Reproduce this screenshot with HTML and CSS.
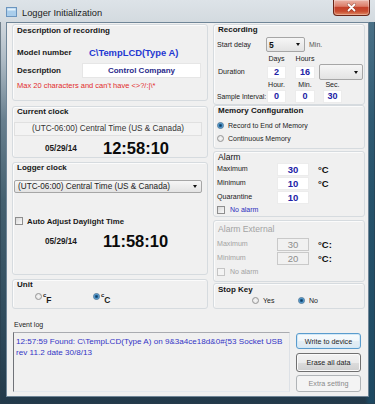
FILE: index.html
```html
<!DOCTYPE html>
<html>
<head>
<meta charset="utf-8">
<title>Logger Initialization</title>
<link rel="stylesheet" href="styles.css">
</head>
<body>
<div class="window">
  <div class="titlebar">
    <svg class="appicon" width="11" height="10" viewBox="0 0 11 10"><rect x="0.5" y="0.5" width="10" height="9" fill="#a9cdeb" stroke="#6b95bf"/><rect x="1.5" y="1.5" width="8" height="2" fill="#e3f1fb"/></svg>
    <span class="wtitle">Logger Initialization</span>
    <div class="closebtn"><svg width="11" height="9" viewBox="0 0 11 9"><path d="M2.5 1.5 L8.5 7.5 M8.5 1.5 L2.5 7.5" stroke="#5a2318" stroke-width="3" stroke-linecap="round" opacity="0.45"/><path d="M2.5 1.5 L8.5 7.5 M8.5 1.5 L2.5 7.5" stroke="#ffffff" stroke-width="1.8" stroke-linecap="round"/></svg></div>
  </div>
  <div class="client">
    <div class="top">
      <div class="col colL">
        <div class="group g-desc">
          <div class="gtitle">Description of recording</div>
          <div class="row r-model"><span class="blab w72">Model number</span><span class="model">C\TempLCD(Type A)</span></div>
          <div class="row r-descr"><span class="blab w65">Description</span><div class="descbox">Control Company</div></div>
          <div class="warn">Max 20 characters and can't have &lt;&gt;?/:|\*</div>
        </div>
        <div class="group g-clock">
          <div class="gtitle">Current clock</div>
          <div class="utc">(UTC-06:00) Central Time (US &amp; Canada)</div>
          <div class="dt"><span class="date">05/29/14</span><span class="time">12:58:10</span></div>
        </div>
        <div class="group g-logger">
          <div class="gtitle">Logger clock</div>
          <div class="select sel-wide"><span>(UTC-06:00) Central Time (US &amp; Canada)</span><span class="arrow"></span></div>
          <div class="chkrow"><span class="chk"></span><span class="chklbl">Auto Adjust Daylight Time</span></div>
          <div class="dt"><span class="date">05/29/14</span><span class="time">11:58:10</span></div>
        </div>
        <div class="group g-unit">
          <div class="gtitle">Unit</div>
          <div class="unitrow">
            <div class="uopt"><span class="radio"></span><span class="ulbl"><span class="deg">c</span><span class="unitl">F</span></span></div>
            <div class="uopt"><span class="radio on"></span><span class="ulbl"><span class="deg">c</span><span class="unitl">C</span></span></div>
          </div>
        </div>
      </div>
      <div class="col colR">
        <div class="group g-rec">
          <div class="gtitle">Recording</div>
          <div class="row r-start"><span class="lab w49">Start delay</span><div class="select sel-delay"><span class="five">5</span><span class="arrow"></span></div><span class="mins">Min.</span></div>
          <div class="row r-days"><span class="lab cell19">Days</span><span class="lab cell20 ml9">Hours</span></div>
          <div class="row r-dur"><span class="lab w50 ind1">Duration</span><div class="vbox cell19">2</div><div class="vbox cell20 ml9">16</div><div class="select dd"><span></span><span class="arrow"></span></div></div>
          <div class="row r-hr"><span class="lab cell19">Hour.</span><span class="lab cell20 ml9">Min.</span><span class="lab cell19 ml8">Sec.</span></div>
          <div class="row r-samp"><span class="lab w50 samplab">Sample Interval:</span><div class="vbox cell19">0</div><div class="vbox cell20 ml9">0</div><div class="vbox cell19 ml8">30</div></div>
        </div>
        <div class="group g-mem">
          <div class="gtitle">Memory Configuration</div>
          <div class="ropt ro1"><span class="radio on"></span><span class="rlbl">Record to End of Memory</span></div>
          <div class="ropt ro2"><span class="radio"></span><span class="rlbl">Continuous Memory</span></div>
        </div>
        <div class="group g-alarm">
          <div class="atitle">Alarm</div>
          <div class="arow"><span class="lab w60">Maximum</span><div class="vbox abox">30</div><span class="degc">°C</span></div>
          <div class="arow"><span class="lab w60">Minimum</span><div class="vbox abox">10</div><span class="degc">°C</span></div>
          <div class="arow"><span class="lab w60">Quarantine</span><div class="vbox abox">10</div></div>
          <div class="nalarm"><span class="chk"></span><span class="nal">No alarm</span></div>
        </div>
        <div class="group g-ext">
          <div class="atitle dis">Alarm External</div>
          <div class="arow ar1"><span class="lab w60 dis">Maximum</span><div class="vbox abox disbox">30</div><span class="degc">°C:</span></div>
          <div class="arow"><span class="lab w60 dis">Minimum</span><div class="vbox abox disbox">20</div><span class="degc">°C:</span></div>
          <div class="nalarm na2"><span class="chk dischk"></span><span class="nal dis">No alarm</span></div>
        </div>
        <div class="group g-stop">
          <div class="gtitle">Stop Key</div>
          <div class="stoprow">
            <div class="sopt"><span class="radio"></span><span class="rlbl">Yes</span></div>
            <div class="sopt"><span class="radio on"></span><span class="rlbl">No</span></div>
          </div>
        </div>
      </div>
    </div>
    <div class="evlabel">Event log</div>
    <div class="bottom">
      <div class="log">12:57:59 Found: C\TempLCD(Type A) on 9&amp;3a4ce18d&amp;0#{53 Socket USB<br>rev 11.2 date 30/8/13</div>
      <div class="btns">
        <div class="btn b-write">Write to device</div>
        <div class="btn b-erase">Erase all data</div>
        <div class="btn b-extra">Extra setting</div>
      </div>
    </div>
  </div>
</div>
</body>
</html>
```
FILE: styles.css
```css
* { box-sizing: border-box; }
html, body { margin: 0; padding: 0; }
body {
  font-family: "Liberation Sans", Arial, sans-serif;
  color: #1a1a1a;
  background: #2c4556;
}
.window {
  width: 375px;
  height: 404px;
  display: flex;
  flex-direction: column;
  background:
    linear-gradient(90deg, rgba(0,0,0,0) 365px, rgba(28, 78, 105, 0.75) 369px),
    linear-gradient(180deg, #dce2e7 0, #d0d7dd 24px, #aebbc5 60px, #687f8e 120px, #44606f 200px, #2f4b5c 320px, #22394a 404px);
  box-shadow: inset 0 0 0 1px rgba(40, 60, 75, 0.55);
}
.titlebar {
  height: 22px;
  flex: none;
  display: flex;
  align-items: flex-start;
  background: linear-gradient(180deg, #dde3e8, #d3dadf);
}
.appicon { margin: 7px 0 0 6px; flex: none; }
.wtitle {
  margin: 8px 0 0 5px;
  font-size: 9.3px;
  line-height: 10px;
  color: #1c1c1c;
  white-space: nowrap;
}
.closebtn {
  margin-left: auto;
  margin-right: 5px;
  width: 37px;
  height: 16px;
  border: 1px solid #6a2517;
  border-top: none;
  border-radius: 0 0 4px 4px;
  background: linear-gradient(180deg, #ebb3a6 0, #db7e6a 42%, #c4412a 50%, #c84c2f 75%, #e08a64 100%);
  box-shadow: inset 0 0 0 1px rgba(255, 255, 255, 0.3);
  display: flex;
  align-items: center;
  justify-content: center;
}
.client {
  margin: 0 6px;
  height: 375px;
  flex: none;
  background: #f0f0f0;
  border: 1px solid #6f8597;
  padding: 1px 3px 0 5px;
}
.top { display: flex; gap: 5px; }
.col { display: flex; flex-direction: column; }
.colL { width: 196px; }
.colR { width: 152px; }
.group {
  border: 1px solid #d6dbdf;
  border-radius: 3px;
  box-shadow: inset 1px 1px 0 #fbfbfb;
  padding-left: 4px;
  display: flex;
  flex-direction: column;
}
.colR .group { padding-left: 3px; }
.gtitle {
  font-weight: bold;
  font-size: 8px;
  height: 10px;
  line-height: 10px;
  white-space: nowrap;
  color: #161616;
}
.colR .gtitle { margin-left: 1px; }
.row { display: flex; align-items: center; white-space: nowrap; }

/* description */
.g-desc { height: 77px; }
.g-desc .gtitle { height: 11px; line-height: 11px; }
.r-model { margin-top: 8px; height: 16px; }
.blab { font-weight: bold; font-size: 8px; flex: none; }
.w72 { width: 72px; }
.w65 { width: 65px; }
.model { color: #1f38d2; font-weight: bold; font-size: 9.4px; }
.r-descr { margin-top: 3px; height: 15px; }
.descbox {
  width: 119px;
  height: 15px;
  background: #fff;
  border: 1px solid #e6e6e6;
  color: #2b2b8c;
  font-weight: bold;
  font-size: 8px;
  text-align: center;
  line-height: 13px;
}
.warn {
  margin-top: 3px;
  height: 10px;
  line-height: 10px;
  color: #e22b2b;
  font-size: 7.5px;
  white-space: nowrap;
}

/* clocks */
.g-clock { height: 52px; margin-top: 5px; }
.utc {
  margin: 5px 0 0 -3px;
  width: 188px;
  height: 14px;
  border: 1px solid #e0e0e0;
  background: #f3f3f3;
  font-size: 8.2px;
  line-height: 12px;
  text-align: center;
  color: #333;
  white-space: nowrap;
}
.dt {
  display: flex;
  align-items: center;
  height: 14px;
  padding-left: 28px;
  margin-top: 5px;
}
.date { width: 58px; font-weight: bold; font-size: 8.2px; color: #1a1a1a; }
.time { font-weight: bold; font-size: 16.5px; line-height: 14px; color: #0a0a0a; }
.g-logger { height: 113px; margin-top: 4px; }
.g-logger .dt { margin-top: 7px; }
.select {
  display: flex;
  align-items: center;
  justify-content: space-between;
  border: 1px solid #a6a6a6;
  border-radius: 2px;
  background: linear-gradient(180deg, #f6f6f6, #e3e3e3);
  padding: 0 4px 0 3px;
  white-space: nowrap;
}
.arrow {
  width: 0;
  height: 0;
  border-left: 2.5px solid transparent;
  border-right: 2.5px solid transparent;
  border-top: 3px solid #111;
  flex: none;
}
.sel-wide {
  margin: 7px 0 0 -3px;
  width: 188px;
  height: 13px;
  font-size: 8.2px;
  color: #222;
}
.chkrow {
  margin: 22px 0 0 -2px;
  height: 12px;
  display: flex;
  align-items: center;
}
.chk {
  width: 8px;
  height: 8px;
  border: 1px solid #8e8e8e;
  background: linear-gradient(135deg, #d8d8d8, #fafafa);
  flex: none;
}
.chklbl { margin-left: 4px; font-weight: bold; font-size: 7.8px; white-space: nowrap; }

/* unit */
.g-unit { height: 30px; margin-top: 4px; }
.unitrow { height: 12px; display: flex; align-items: center; padding-left: 18px; }
.uopt { display: flex; align-items: center; width: 58px; }
.radio {
  width: 7px;
  height: 7px;
  border-radius: 50%;
  border: 1px solid #959595;
  background: radial-gradient(circle, #f6f6f6 0, #dedede 100%);
  flex: none;
}
.radio.on {
  border-color: #4a7699;
  background: radial-gradient(circle, #153a5c 0, #1d5a8a 1.2px, #58a3da 2.2px, #cde5f6 3.5px);
}
.ulbl { margin-left: 1px; font-weight: bold; white-space: nowrap; }
.deg { font-size: 6px; vertical-align: 4px; }
.unitl { font-size: 8.5px; vertical-align: -2px; }

/* recording */
.g-rec { height: 81px; }
.lab { font-size: 7.1px; color: #222; white-space: nowrap; flex: none; }
.r-start { margin-top: 2px; height: 15px; }
.w49 { width: 49px; }
.w50 { width: 50px; }
.w60 { width: 60px; }
.ind1 { padding-left: 1px; }
.sel-delay { width: 39px; height: 15px; padding-left: 2px; }
.five { font-weight: bold; font-size: 8.5px; color: #111; }
.mins { margin-left: 4px; color: #555; font-size: 7px; }
.r-days { margin-top: 2px; height: 10px; padding-left: 50px; }
.cell19 { width: 19px; text-align: center; flex: none; }
.cell20 { width: 20px; text-align: center; flex: none; }
.ml9 { margin-left: 9px; }
.ml8 { margin-left: 8px; }
.r-dur { height: 16px; }
.vbox {
  height: 13px;
  background: #fff;
  border: 1px solid #ececec;
  color: #2222a6;
  font-weight: bold;
  font-size: 9px;
  text-align: center;
  line-height: 11px;
}
.dd { width: 44px; height: 16px; margin-left: 4px; }
.r-hr { height: 9px; padding-left: 50px; }
.r-samp { height: 14px; }
.samplab { font-size: 6.8px; }

/* memory */
.g-mem { height: 44px; }
.ropt { display: flex; align-items: center; height: 12px; }
.ro1 { margin-top: 3px; }
.ro2 { margin-top: 1px; }
.rlbl { margin-left: 4px; font-size: 7px; color: #222; white-space: nowrap; }

/* alarm */
.g-alarm { height: 66px; margin-top: 2px; }
.atitle {
  height: 10px;
  line-height: 10px;
  font-size: 8.6px;
  margin-left: 1px;
  color: #111;
  white-space: nowrap;
}
.arow { height: 14px; display: flex; align-items: center; }
.abox { width: 32px; font-size: 9.5px; }
.degc { margin-left: 9px; font-weight: bold; font-size: 9.5px; color: #111; }
.nalarm { height: 11px; display: flex; align-items: center; }
.nal { margin-left: 5px; font-size: 7px; color: #2d2dbd; }
.g-ext { height: 62px; margin-top: 3px; }
.g-ext .atitle { margin-top: 3px; }
.ar1 { margin-top: 3px; }
.na2 { margin-top: 1px; }
.dis { color: #a3a3a3; }
.disbox { color: #8d8d8d; background: #f1f1f1; border-color: #c9c9c9; font-weight: normal; }
.dischk { border-color: #c5c5c5; background: #f4f4f4; }

/* stop key */
.g-stop { height: 26px; margin-top: 1px; }
.g-stop .gtitle { height: 11px; line-height: 11px; }
.stoprow { height: 11px; display: flex; align-items: center; padding-left: 35px; }
.sopt { display: flex; align-items: center; width: 46px; }

/* bottom */
.evlabel { margin: 11px 0 0 2px; height: 10px; line-height: 10px; font-size: 7px; color: #222; }
.bottom { display: flex; margin-top: 2px; }
.log {
  margin-left: 1px;
  width: 277px;
  height: 60px;
  border-style: solid;
  border-width: 1px;
  border-color: #a9abb0 #dde1e6 #e3e8ee #6f7278;
  background: #f0f0f0;
  padding: 3px 0 0 2px;
  font-size: 8.1px;
  line-height: 11px;
  color: #3434c6;
  white-space: nowrap;
}
.btns { margin-left: 6px; width: 65px; display: flex; flex-direction: column; }
.btn {
  display: flex;
  align-items: center;
  justify-content: center;
  border-radius: 3px;
  font-size: 7.2px;
  color: #1e1e1e;
  white-space: nowrap;
}
.b-write {
  margin-top: 1px;
  height: 16px;
  border: 1px solid #5a9ccd;
  background: linear-gradient(180deg, #f7fbfd 0, #f0f6fa 50%, #e4eef5 50%, #dbe9f3 100%);
  box-shadow: inset 0 0 0 1px #d2e8f7;
}
.b-erase {
  margin-top: 4px;
  height: 19px;
  border: 1px solid #707070;
  background: linear-gradient(180deg, #f2f2f2 0, #ebebeb 50%, #dddddd 50%, #cfcfcf 100%);
  box-shadow: inset 0 0 0 1px #fafafa;
}
.b-extra {
  margin-top: 3px;
  height: 17px;
  border: 1px solid #b0b4b7;
  background: #f4f4f4;
  color: #8a8a8a;
}
```
